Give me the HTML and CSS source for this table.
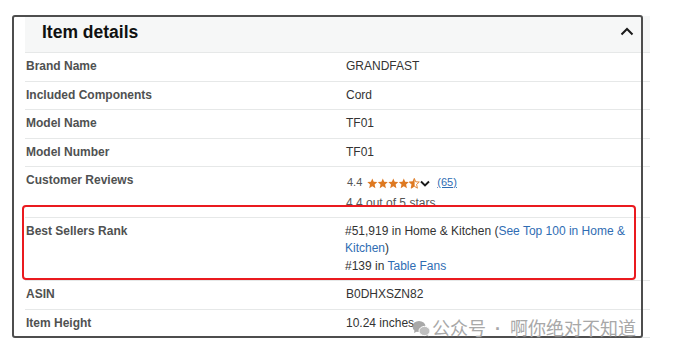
FILE: index.html
```html
<!DOCTYPE html>
<html lang="en">
<head>
<meta charset="utf-8">
<title>Item details</title>
<link rel="stylesheet" href="styles.css">
</head>
<body>
<div class="page">
  <section class="panel">
    <div class="head">
      <h2 class="title">Item details</h2>
      <svg class="chev-up" width="14" height="9" viewBox="0 0 14 9"><path d="M1.5 7.5 L7 2 L12.5 7.5" fill="none" stroke="#1a1a1a" stroke-width="2"/></svg>
    </div>
    <div class="rows">
      <div class="row"><div class="label">Brand Name</div><div class="value">GRANDFAST</div></div>
      <div class="row"><div class="label">Included Components</div><div class="value">Cord</div></div>
      <div class="row"><div class="label">Model Name</div><div class="value">TF01</div></div>
      <div class="row"><div class="label">Model Number</div><div class="value">TF01</div></div>
      <div class="row"><div class="label">Customer Reviews</div>
        <div class="value">
          <div class="rating">
            <span class="score">4.4</span>
            <svg class="stars" width="53" height="11" viewBox="0 0 53 11">
              <defs>
                <polygon id="st" points="5.3,0.4 6.7,3.8 10.3,4 7.6,6.4 8.4,10.2 5.3,8.2 2.2,10.2 3,6.4 0.3,4 3.9,3.8"/>
                <clipPath id="half"><rect x="42" y="0" width="5.6" height="11"/></clipPath>
              </defs>
              <use href="#st" x="0" fill="#de7921"/>
              <use href="#st" x="10.5" fill="#de7921"/>
              <use href="#st" x="21" fill="#de7921"/>
              <use href="#st" x="31.5" fill="#de7921"/>
              <use href="#st" x="42" fill="none" stroke="#de7921" stroke-width="0.9"/>
              <g clip-path="url(#half)"><use href="#st" x="42" fill="#de7921"/></g>
            </svg>
            <svg class="chev-down" width="10" height="7" viewBox="0 0 10 7"><path d="M1 1.5 L5 5.5 L9 1.5" fill="none" stroke="#1a1a1a" stroke-width="1.9"/></svg>
            <a class="link count" href="#">(65)</a>
          </div>
          <div class="outof">4.4 out of 5 stars</div>
        </div>
      </div>
      <div class="row"><div class="label">Best Sellers Rank</div>
        <div class="value rank">
          <div>#51,919 in Home &amp; Kitchen (<a class="link" href="#">See Top 100 in Home &amp;</a></div>
          <div><a class="link" href="#">Kitchen</a>)</div>
          <div>#139 in <a class="link" href="#">Table Fans</a></div>
        </div>
      </div>
      <div class="row"><div class="label">ASIN</div><div class="value">B0DHXSZN82</div></div>
      <div class="row"><div class="label">Item Height</div><div class="value">10.24 inches</div></div>
    </div>
  </section>

  <div class="frame"></div>
  <div class="highlight"></div>
  <div class="watermark">
    <svg class="wechat" width="19" height="17" viewBox="0 0 19 17">
      <ellipse cx="7" cy="6.5" rx="6.5" ry="5.5" fill="#9a9a9a"/>
      <path d="M2.5 10.5 L2 13 L5 11.5 Z" fill="#9a9a9a"/>
      <ellipse cx="12.5" cy="11" rx="5.5" ry="4.6" fill="#b4b4b4" stroke="#fff" stroke-width="1"/>
      <path d="M15.5 14.5 L16.8 16.5 L13.5 15.2 Z" fill="#b4b4b4"/>
    </svg>
    <span class="wm-text">公众号<span class="wm-dot">·</span>啊你绝对不知道</span>
  </div>
</div>
</body>
</html>
```
FILE: styles.css
```css
html, body {
  margin: 0;
  padding: 0;
  background: #ffffff;
}

.page {
  position: relative;
  width: 690px;
  height: 350px;
  overflow: hidden;
  font-family: "Liberation Sans", Arial, sans-serif;
}

.panel {
  margin-left: 25px;
  padding-top: 16px;
  width: 625px;
}

.head {
  height: 36px;
  box-sizing: border-box;
  padding: 0 16px 5px 17px;
  background: #f6f7f7;
  display: flex;
  align-items: center;
  justify-content: space-between;
}

.title {
  margin: 0;
  font-size: 17.5px;
  font-weight: bold;
  color: #0f1111;
  line-height: 20px;
}

.chev-up {
  display: block;
}

.rows {
  border-bottom: 1px solid #e3e6e6;
}

.row {
  display: grid;
  grid-template-columns: 320px 1fr;
  border-top: 1px solid #e6e8e8;
  padding: 5px 0 5px 0;
  line-height: 17.5px;
  font-size: 12px;
}

.label {
  padding-left: 1px;
  font-weight: bold;
  color: #4f5151;
}

.value {
  padding-left: 1px;
  color: #333333;
}

.rating {
  display: flex;
  align-items: center;
  height: 22px;
  font-size: 11px;
  color: #555;
}

.score {
  margin-left: 1px;
  margin-right: 5px;
}

.stars {
  display: block;
  margin-right: 0;
}

.chev-down {
  display: block;
  margin-right: 7px;
}

.count {
  font-size: 11px;
}

.outof {
  line-height: 14px;
  padding-top: 1.5px;
  margin-bottom: 2px;
  color: #555;
}

.link {
  color: #2f6db3;
  text-decoration: none;
}

.count.link {
  text-decoration: underline;
}

.rank {
  padding-left: 0;
}

/* annotation overlays */
.frame {
  position: absolute;
  left: 12px;
  top: 15px;
  width: 631px;
  height: 323px;
  box-sizing: border-box;
  border: 2px solid #4e4e4e;
  border-radius: 3px;
}

.highlight {
  position: absolute;
  left: 22px;
  top: 205px;
  width: 614px;
  height: 75px;
  box-sizing: border-box;
  border: 2px solid #ea1a1f;
  border-radius: 4px;
}

.watermark {
  position: absolute;
  left: 412px;
  top: 316px;
  display: flex;
  align-items: center;
  gap: 1px;
}

.wechat {
  display: block;
  opacity: 0.85;
}

.wm-text {
  font-family: "Noto Sans CJK SC", "Noto Sans", sans-serif;
  font-size: 18px;
  line-height: 22px;
  color: #a8a8a8;
  text-shadow: 0 0 2px rgba(255,255,255,0.6);
}

.wm-dot {
  font-family: "Liberation Sans", Arial, sans-serif;
  padding: 0 9px;
  font-weight: bold;
}
```
